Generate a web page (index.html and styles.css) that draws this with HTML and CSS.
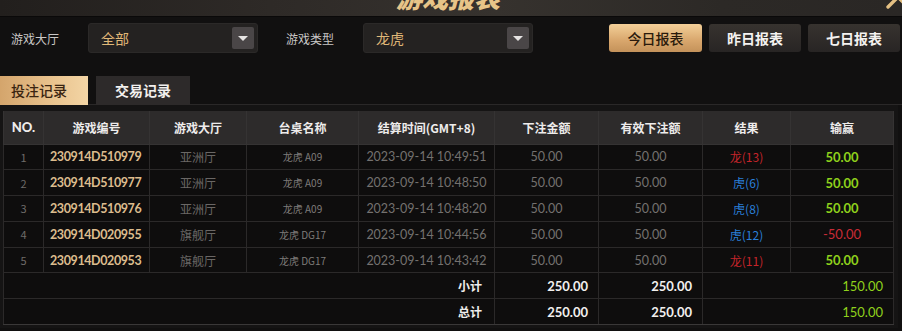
FILE: index.html
```html
<!DOCTYPE html>
<html lang="zh">
<head>
<meta charset="utf-8">
<title>游戏报表</title>
<link rel="stylesheet" href="styles.css">
</head>
<body>
<div class="panel">
  <div class="header">
    <div class="title">游戏报表</div>
    <div class="close">
      <svg width="26" height="26" viewBox="0 0 26 26"><path d="M3 3 L23 23 M23 3 L3 23" stroke="#e4c083" stroke-width="3.4" stroke-linecap="round" fill="none"/></svg>
    </div>
  </div>

  <div class="filters">
    <span class="label">游戏大厅</span>
    <div class="select"><span>全部</span><i class="arrow"></i></div>
    <span class="label">游戏类型</span>
    <div class="select"><span>龙虎</span><i class="arrow"></i></div>
    <div class="btns">
      <button class="btn gold">今日报表</button>
      <button class="btn dark">昨日报表</button>
      <button class="btn dark">七日报表</button>
    </div>
  </div>

  <div class="tabs">
    <div class="tab active">投注记录</div>
    <div class="tab">交易记录</div>
  </div>

  <div class="wrap">
    <table class="grid">
      <colgroup>
        <col style="width:40px"><col style="width:106px"><col style="width:97px"><col style="width:112px"><col style="width:136px"><col style="width:104px"><col style="width:104px"><col style="width:88px"><col style="width:103px">
      </colgroup>
      <thead>
        <tr><th>NO.</th><th>游戏编号</th><th>游戏大厅</th><th>台桌名称</th><th>结算时间(GMT+8)</th><th>下注金额</th><th>有效下注额</th><th>结果</th><th>输赢</th></tr>
      </thead>
      <tbody>
        <tr><td class="no">1</td><td class="gid">230914D510979</td><td class="hall">亚洲厅</td><td class="tbl">龙虎 A09</td><td class="num">2023-09-14 10:49:51</td><td class="num">50.00</td><td class="num">50.00</td><td class="red">龙(13)</td><td class="win">50.00</td></tr>
        <tr><td class="no">2</td><td class="gid">230914D510977</td><td class="hall">亚洲厅</td><td class="tbl">龙虎 A09</td><td class="num">2023-09-14 10:48:50</td><td class="num">50.00</td><td class="num">50.00</td><td class="blue">虎(6)</td><td class="win">50.00</td></tr>
        <tr><td class="no">3</td><td class="gid">230914D510976</td><td class="hall">亚洲厅</td><td class="tbl">龙虎 A09</td><td class="num">2023-09-14 10:48:20</td><td class="num">50.00</td><td class="num">50.00</td><td class="blue">虎(8)</td><td class="win">50.00</td></tr>
        <tr><td class="no">4</td><td class="gid">230914D020955</td><td class="hall">旗舰厅</td><td class="tbl">龙虎 DG17</td><td class="num">2023-09-14 10:44:56</td><td class="num">50.00</td><td class="num">50.00</td><td class="blue">虎(12)</td><td class="loss">-50.00</td></tr>
        <tr><td class="no">5</td><td class="gid">230914D020953</td><td class="hall">旗舰厅</td><td class="tbl">龙虎 DG17</td><td class="num">2023-09-14 10:43:42</td><td class="num">50.00</td><td class="num">50.00</td><td class="red">龙(11)</td><td class="win">50.00</td></tr>
        <tr class="sum"><td colspan="5" class="slabel">小计</td><td class="sval">250.00</td><td class="sval">250.00</td><td colspan="2" class="swin">150.00</td></tr>
        <tr class="sum"><td colspan="5" class="slabel">总计</td><td class="sval">250.00</td><td class="sval">250.00</td><td colspan="2" class="swin">150.00</td></tr>
      </tbody>
    </table>
  </div>
</div>
</body>
</html>
```
FILE: styles.css
```css
* { box-sizing: border-box; }
html, body { margin: 0; padding: 0; }
body {
  background: #111010;
  font-family: "Noto Sans CJK SC", "Noto Sans", sans-serif;
  width: 902px;
  height: 331px;
  overflow: hidden;
}
.panel { width: 902px; }

.header {
  position: relative;
  height: 17px;
  background: linear-gradient(to right, #221f1d 0%, #2e2a27 30%, #36322e 55%, #2c2926 80%, #2a2725 100%);
  border-bottom: 1px solid #0a0909;
  overflow: hidden;
  display: flex;
  justify-content: center;
}
.title {
  margin-top: -17px;
  margin-left: -6px;
  font-size: 26px;
  line-height: 28px;
  font-weight: 900;
  font-style: italic;
  color: #e7c488;
}
.close {
  position: absolute;
  right: -9px;
  top: -16px;
}

.filters {
  display: flex;
  align-items: center;
  height: 30px;
  margin-top: 6px;
  padding-left: 11px;
}
.label {
  font-size: 12px;
  color: #c9c7c5;
  width: 77px;
}
.select {
  width: 170px;
  height: 30px;
  background: #242221;
  border: 1px solid #2b2928;
  border-radius: 3px;
  display: flex;
  align-items: center;
  justify-content: space-between;
  padding: 0 3px 0 12px;
  margin-right: 28px;
  font-size: 14px;
  color: #e0b878;
}
.arrow {
  width: 22px;
  height: 22px;
  background: #4a4647;
  border-radius: 2px;
  position: relative;
}
.arrow::after {
  content: "";
  position: absolute;
  left: 6px;
  top: 9px;
  border-left: 5px solid transparent;
  border-right: 5px solid transparent;
  border-top: 5px solid #e6e4e3;
}
.btns {
  margin-left: 48px;
  display: flex;
  gap: 7px;
}
.btn {
  width: 93px;
  height: 28px;
  border: none;
  border-radius: 3px;
  font-family: inherit;
  font-size: 14px;
  font-weight: 700;
  padding: 0;
}
.btn.gold {
  background: linear-gradient(#f3cf98, #d8a66c 60%, #c4925a);
  color: #2a1a0c;
  font-weight: 500;
}
.btn.dark {
  background: linear-gradient(#37332f, #282524);
  color: #f4f2f0;
  width: 92px;
}

.tabs {
  display: flex;
  gap: 8px;
  margin-top: 23px;
  height: 29px;
  border-bottom: 1px solid #2a2828;
}
.tab {
  width: 94px;
  height: 29px;
  line-height: 29px;
  text-align: center;
  font-size: 14px;
  font-weight: 700;
  color: #f2f0ee;
  background: #2d2a2a;
}
.tab.active {
  width: 88px;
  background: linear-gradient(to right, #d4a56c, #e9c38e 60%, #f3d5a5);
  color: #3a2410;
  font-weight: 500;
  text-align: left;
  padding-left: 11px;
}

.wrap {
  width: 898px;
  padding: 6px 5px 3px 3px;
  background: #151414;
}
.grid {
  width: 890px;
  border-collapse: collapse;
  table-layout: fixed;
  font-size: 12px;
}
.grid th {
  height: 33px;
  background: #2d2b2b;
  color: #eeeceb;
  font-weight: 700;
  font-size: 12px;
  border: 1px solid #353333;
  border-top: none;
}
.grid th:first-child { font-family: "Lato", "Noto Sans", sans-serif; font-size: 13px; font-weight: 900; }
.grid td {
  height: 25.8px;
  background: #0e0d0d;
  border: 1px solid #2b2929;
  text-align: center;
  padding: 0;
  color: #767371;
}
.grid td.no { font-size: 11px; color: #6e6b69; }
.grid td.gid {
  text-align: left;
  padding-left: 6px;
  color: #dcbc8e;
  font-family: "Lato", "Noto Sans", sans-serif;
  font-size: 12.5px;
  letter-spacing: -0.4px;
  font-weight: 700;
}
.grid td.hall { color: #6a6765; font-size: 12px; }
.grid td.tbl { color: #7e7b79; font-size: 10px; }
.grid td.num { font-family: "Lato", "Noto Sans", sans-serif; font-size: 12.5px; color: #74716f; }
.grid td.red { color: #c5242a; font-size: 12px; }
.grid td.blue { color: #2a7fd8; font-size: 12px; }
.grid td.win { color: #8fd11c; font-family: "Lato", "Noto Sans", sans-serif; font-size: 13px; font-weight: 700; }
.grid td.loss { color: #c92b36; font-family: "Lato", "Noto Sans", sans-serif; font-size: 13px; }
.grid tr.sum td { text-align: right; }
.grid td.slabel { color: #efedec; font-weight: 700; padding-right: 12px; }
.grid td.sval { color: #f2f0ef; font-family: "Lato", "Noto Sans", sans-serif; font-size: 13px; font-weight: 700; padding-right: 10px; }
.grid td.swin { color: #8fd11c; font-family: "Lato", "Noto Sans", sans-serif; font-size: 13px; padding-right: 10px; }
.grid tbody tr:last-child td { border-bottom-color: #3a3838; }
```
